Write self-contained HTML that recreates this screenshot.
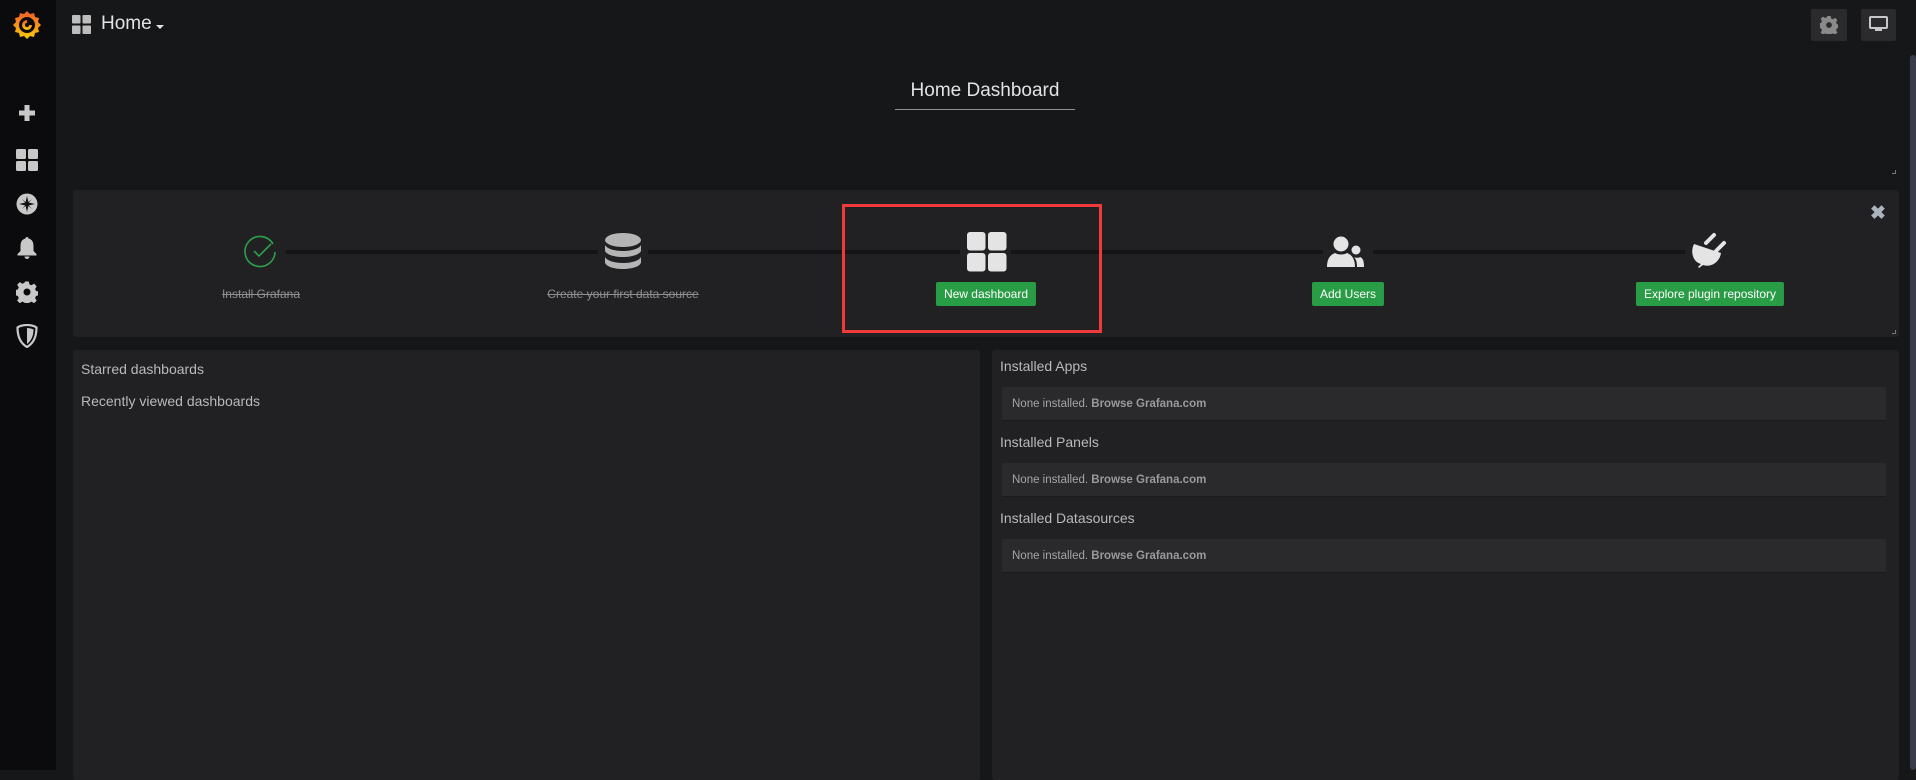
<!DOCTYPE html>
<html><head><meta charset="utf-8"><style>
*{margin:0;padding:0;box-sizing:border-box}
body{width:1916px;height:770px;overflow:hidden;background:#161719;font-family:"Liberation Sans",sans-serif;color:#d8d9da;position:relative}
.a{position:absolute}
.side{left:0;top:0;width:56px;height:770px;background:#0b0b0d}
.panel{background:#212124;border-radius:3px}
.line{height:4px;background:#141416;top:250px}
.btn{background:#299c46;color:#fff;font-size:12px;height:24px;line-height:24px;padding:0 8px;border-radius:2px;top:282px;transform:translateX(-50%);white-space:nowrap}
.strike{color:#8e8e8e;font-size:12px;text-decoration:line-through;top:287px;transform:translateX(-50%);white-space:nowrap}
.h{font-size:14px;color:#b8b9ba}
.box{left:1002px;width:884px;height:34px;background:#2a2a2d;border-bottom:1px solid #1a1a1c;font-size:11.5px;color:#a5a5a5;line-height:34px;padding-left:10px}
.box b{color:#9a9a9a}
</style></head><body>
<div class="a side"></div>
<svg class="a" style="left:10px;top:8px" width="34" height="34" viewBox="0 0 34 34"><defs><linearGradient id="g" x1="0" y1="1" x2="0" y2="0"><stop offset="0" stop-color="#fbca0a"/><stop offset="1" stop-color="#f05a28"/></linearGradient></defs><path d="M17 3l3 3 4-1 1 4 4 1-1 4 3 3-3 3 1 4-4 1-1 4-4-1-3 3-3-3-4 1-1-4-4-1 1-4-3-3 3-3-1-4 4-1 1-4 4 1z" fill="url(#g)"/><circle cx="17" cy="17" r="8" fill="#0b0b0d"/><path d="M17 12a5 5 0 1 0 5 5h-3a2 2 0 1 1-2-2z" fill="url(#g)"/></svg>
<svg class="a" style="left:17px;top:103px" width="20" height="20" viewBox="0 0 20 20"><path d="M7.5 2h5v5.5H18v5h-5.5V18h-5v-5.5H2v-5h5.5z" fill="#c8c8c8"/></svg>
<svg class="a" style="left:16px;top:149px" width="22" height="22" viewBox="0 0 22 22" fill="#c8c8c8"><rect x="0" y="0" width="10" height="10" rx="1.5"/><rect x="12" y="0" width="10" height="10" rx="1.5"/><rect x="0" y="12" width="10" height="10" rx="1.5"/><rect x="12" y="12" width="10" height="10" rx="1.5"/></svg>
<svg class="a" style="left:16px;top:193px" width="22" height="22" viewBox="0 0 22 22"><circle cx="11" cy="11" r="10.5" fill="#c8c8c8"/><path d="M11 3l1.5 6.5L19 11l-6.5 1.5L11 19l-1.5-6.5L3 11l6.5-1.5z M6 6l4 3.5-0.5 0.5z M16 16l-4-3.5 0.5-0.5z M16 6l-3.5 4-0.5-0.5z M6 16l3.5-4 0.5 0.5z" fill="#111"/></svg>
<svg class="a" style="left:17px;top:237px" width="20" height="22" viewBox="0 0 20 22"><path d="M10 0c1 0 1.5.7 1.5 1.5C15 2.3 16.5 5 16.5 9v5l3 3v1.5H.5V17l3-3V9c0-4 1.5-6.7 5-7.5C8.5.7 9 0 10 0z M7.5 19.5h5a2.5 2.5 0 0 1-5 0z" fill="#c8c8c8"/></svg>
<svg class="a" style="left:16px;top:281px" width="22" height="22" viewBox="0 0 22 22"><path d="M9 0h4l.6 3 2.3 1 2.6-1.7 2.8 2.8-1.7 2.6 1 2.3 3 .6v4l-3 .6-1 2.3 1.7 2.6-2.8 2.8-2.6-1.7-2.3 1-.6 3H9l-.6-3-2.3-1-2.6 1.7-2.8-2.8 1.7-2.6-1-2.3-3-.6V9l3-.6 1-2.3L.7 3.5 3.5.7l2.6 1.7 2.3-1z" fill="#c8c8c8" transform="scale(.95) translate(.5 .5)"/><circle cx="11" cy="11" r="3.5" fill="#0b0b0d"/></svg>
<svg class="a" style="left:16px;top:324px" width="22" height="24" viewBox="0 0 22 24"><path d="M11 1C7 1 3.5 2 1.5 3.5 1.5 12 4 19 11 23 18 19 20.5 12 20.5 3.5 18.5 2 15 1 11 1z" fill="none" stroke="#c8c8c8" stroke-width="2.2"/><path d="M11 4v16c4-3 6.5-8 6.5-14.5C15.5 4.5 13 4 11 4z" fill="#c8c8c8"/></svg>
<svg class="a" style="left:72px;top:15px" width="19" height="19" viewBox="0 0 19 19" fill="#bdbdbd"><rect x="0" y="0" width="8.5" height="8.5" rx="1"/><rect x="10.5" y="0" width="8.5" height="8.5" rx="1"/><rect x="0" y="10.5" width="8.5" height="8.5" rx="1"/><rect x="10.5" y="10.5" width="8.5" height="8.5" rx="1"/></svg>
<div class="a" style="left:101px;top:13px;font-size:19px;color:#e3e3e3">Home</div>
<div class="a" style="left:156px;top:25px;border:4px solid transparent;border-top:4px solid #e3e3e3;border-bottom:0;width:0;height:0;border-left-width:4.5px;border-right-width:4.5px"></div>
<div class="a" style="left:1811px;top:9px;width:36px;height:32px;background:#2b2b2e;border-radius:2px"></div>
<svg class="a" style="left:1820px;top:16px" width="18" height="18" viewBox="0 0 22 22"><path d="M9 0h4l.6 3 2.3 1 2.6-1.7 2.8 2.8-1.7 2.6 1 2.3 3 .6v4l-3 .6-1 2.3 1.7 2.6-2.8 2.8-2.6-1.7-2.3 1-.6 3H9l-.6-3-2.3-1-2.6 1.7-2.8-2.8 1.7-2.6-1-2.3-3-.6V9l3-.6 1-2.3L.7 3.5 3.5.7l2.6 1.7 2.3-1z" fill="#8a8a8a"/><circle cx="11" cy="11" r="3.5" fill="#2b2b2e"/></svg>
<div class="a" style="left:1861px;top:9px;width:35px;height:32px;background:#2b2b2e;border-radius:2px"></div>
<svg class="a" style="left:1869px;top:16px" width="19" height="17" viewBox="0 0 19 17"><rect x="1" y="1" width="17" height="11" rx="1" fill="none" stroke="#c8c8c8" stroke-width="2"/><rect x="6" y="13" width="7" height="2" fill="#c8c8c8"/></svg>
<div class="a" style="left:1910px;top:55px;width:6px;height:715px;background:#3a3d47;border-radius:3px"></div>
<div class="a" style="left:895px;width:180px;top:80px;text-align:center;font-size:19px;color:#e3e3e3">Home Dashboard</div>
<div class="a" style="left:895px;top:109px;width:180px;height:1px;background:#8e8e8e"></div>
<div class="a" style="left:1892px;top:170px;width:4px;height:4px;border-right:1px solid #777;border-bottom:1px solid #777"></div>
<div class="a panel" style="left:73px;top:190px;width:1826px;height:147px"></div>
<div class="a line" style="left:286px;width:312px"></div>
<div class="a line" style="left:648px;width:312px"></div>
<div class="a line" style="left:1011px;width:312px"></div>
<div class="a line" style="left:1373px;width:312px"></div>
<svg class="a" style="left:244px;top:235px" width="34" height="34" viewBox="0 0 34 34"><path d="M29 9A15 15 0 1 0 31 17" fill="none" stroke="#2ca04a" stroke-width="1.6"/><path d="M10 16l5 5 12-12" fill="none" stroke="#2ca04a" stroke-width="1.6"/></svg>
<div class="a strike" style="left:261px">Install Grafana</div>
<svg class="a" style="left:604px;top:233px" width="38" height="36" viewBox="0 0 38 36" fill="#b5b5b5"><ellipse cx="19" cy="7" rx="18" ry="7"/><path d="M1 12c2 4 10 6 18 6s16-2 18-6v6c-2 4-10 6-18 6S3 22 1 18z"/><path d="M1 24c2 4 10 6 18 6s16-2 18-6v5c0 4-8 7-18 7S1 33 1 29z"/></svg>
<div class="a strike" style="left:623px">Create your first data source</div>
<svg class="a" style="left:967px;top:232px" width="40" height="40" viewBox="0 0 40 40" fill="#e4e4e4"><rect x="0" y="0" width="18.5" height="18.5" rx="3"/><rect x="21" y="0" width="18.5" height="18.5" rx="3"/><rect x="0" y="21" width="18.5" height="18.5" rx="3"/><rect x="21" y="21" width="18.5" height="18.5" rx="3"/></svg>
<div class="a btn" style="left:986px">New dashboard</div>
<div class="a" style="left:842px;top:204px;width:260px;height:129px;border:3px solid #f03a3a"></div>
<svg class="a" style="left:1327px;top:236px" width="38" height="32" viewBox="0 0 38 32" fill="#e4e4e4"><circle cx="14" cy="8" r="7.5"/><path d="M0 31c0-8 3-12 8-14 3 2 9 2 12 0 5 2 8 6 8 14z"/><circle cx="29" cy="14" r="4.5"/><path d="M30 31c0-5-1-8-3-10 2 1 5 1 6 0 3 1 4 4 4 10z"/></svg>
<div class="a btn" style="left:1348px">Add Users</div>
<svg class="a" style="left:1691px;top:232px" width="36" height="36" viewBox="0 0 36 36"><path d="M3 12C-1 20 2 30 10 32L7 35l1 1 4-3c9 3 17-4 18-12z" fill="#e4e4e4"/><path d="M15 11l8-8M25 19l8-8" stroke="#e4e4e4" stroke-width="4" stroke-linecap="round"/></svg>
<div class="a btn" style="left:1710px">Explore plugin repository</div>
<div class="a" style="left:1870px;top:202px;font-size:19px;font-weight:bold;color:#aeb4bd">✖</div>
<div class="a" style="left:1892px;top:330px;width:4px;height:4px;border-right:1px solid #777;border-bottom:1px solid #777"></div>
<div class="a panel" style="left:73px;top:350px;width:907px;height:430px"></div>
<div class="a h" style="left:81px;top:361px">Starred dashboards</div>
<div class="a h" style="left:81px;top:393px">Recently viewed dashboards</div>
<div class="a panel" style="left:992px;top:350px;width:907px;height:430px"></div>
<div class="a h" style="left:1000px;top:358px">Installed Apps</div>
<div class="a box" style="top:387px">None installed. <b>Browse Grafana.com</b></div>
<div class="a h" style="left:1000px;top:434px">Installed Panels</div>
<div class="a box" style="top:463px">None installed. <b>Browse Grafana.com</b></div>
<div class="a h" style="left:1000px;top:510px">Installed Datasources</div>
<div class="a box" style="top:539px">None installed. <b>Browse Grafana.com</b></div>
</body></html>
